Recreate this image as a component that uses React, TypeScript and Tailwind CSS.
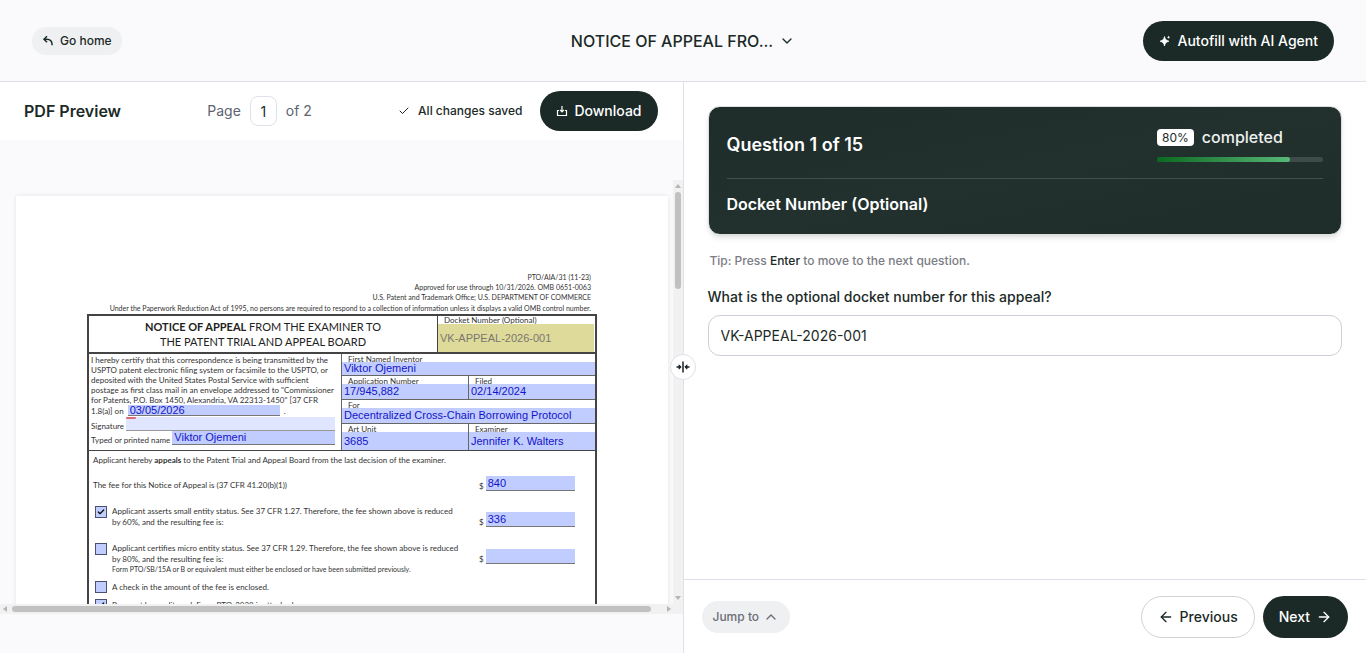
import React from "react";
import { ArrowLeft, ArrowRight, Check, ChevronDown, ChevronUp } from "lucide-react";

const fieldBase =
  "block min-h-0 min-w-0 rounded-none border-0 bg-[#c1cdff] px-0.5 py-0 font-['Liberation_Sans',Arial,sans-serif] text-[11px] text-[#1414c8] outline-none";

function GoBackIcon() {
  return (
    <svg viewBox="0 0 12 12" className="h-3 w-3" fill="none" stroke="currentColor" strokeWidth="1.5">
      <path d="M5 1.200 2 4.200l3 3" />
      <path d="M2.200 4.200h2.600c3.400 0 5.400 2.200 5.400 6" />
    </svg>
  );
}

function SparkIcon() {
  return (
    <svg viewBox="0 0 12 12" className="h-3 w-3" fill="currentColor">
      <path d="M5.500 1.600C6.100 4.400 7 5.400 9.900 6.200 7 7 6.100 8 5.500 10.900 4.900 8 4 7 1.100 6.200 4 5.400 4.900 4.400 5.500 1.600Z" stroke="currentColor" strokeWidth=".8" strokeLinejoin="round" />
      <path d="M9.600.5c.3 1.100.6 1.400 1.700 1.700-1.100.3-1.400.6-1.700 1.700-.3-1.100-.6-1.400-1.700-1.700C9 1.900 9.300 1.600 9.600.5Z" />
    </svg>
  );
}

function DownloadIcon() {
  return (
    <svg viewBox="0 0 12 12" className="h-3 w-3" fill="none" stroke="currentColor" strokeWidth="1.200">
      <path d="M6 1v5.500M4 4.800 6 6.800 8 4.800" />
      <path d="M3 5.500H1.500v5h9v-5H9" />
    </svg>
  );
}

function SplitIcon() {
  return (
    <svg viewBox="0 0 14 14" className="h-3.5 w-3.5" fill="none" stroke="currentColor" strokeWidth="1.500">
      <path d="M7 1.500v11M.5 7h4.300M13.500 7H9.200" />
      <path d="M3 4.800 5.200 7 3 9.200ZM11 4.800 8.800 7l2.200 2.200Z" fill="currentColor" strokeWidth=".8" />
    </svg>
  );
}

function Cell({ id, label, value, height }: { id: string; label: string; value: string; height: string }) {
  return (
    <div className={`flex min-w-0 flex-1 flex-col ${height}`}>
      <label htmlFor={id} className="h-2 shrink-0 pl-1.5 leading-[10px]">
        {label}
      </label>
      <input id={id} defaultValue={value} className={`${fieldBase} w-full flex-1`} />
    </div>
  );
}

function Fee({ id, value }: { id: string; value: string }) {
  return (
    <div className="flex w-24 items-end gap-0.5">
      <label htmlFor={id} className="leading-[9px]">$</label>
      <div className="flex-1 border-b border-[#777]">
        <input id={id} defaultValue={value} className={`${fieldBase} h-3.5 w-full`} />
      </div>
    </div>
  );
}

function Tick({ id, checked }: { id: string; checked?: boolean }) {
  return (
    <span className="relative block h-3 w-3 shrink-0">
      <input
        id={id}
        type="checkbox"
        defaultChecked={checked}
        className="peer block h-3 w-3 appearance-none border border-[#4a5070] bg-[#c1cdff]"
      />
      <Check className="pointer-events-none absolute top-0.5 left-0.5 hidden h-2 w-2 text-[#111] peer-checked:block" strokeWidth={4} />
    </span>
  );
}

function PdfPage() {
  return (
    <article className="w-[652px] shrink-0 bg-white px-[71px] pt-[76px] font-[Lato,sans-serif] text-[8px] whitespace-nowrap text-[#333] shadow-[0_0_4px_rgba(0,0,0,0.1)]">
      <div className="pr-1.5 pb-px text-right text-[7px] leading-[10px]">
        <p>PTO/AIA/31 (11-23)</p>
        <p>Approved for use through 10/31/2026. OMB 0651-0063</p>
        <p>U.S. Patent and Trademark Office; U.S. DEPARTMENT OF COMMERCE</p>
        <p className="pt-px">
          Under the Paperwork Reduction Act of 1995, no persons are required to respond to a collection of information unless it displays a valid OMB control number.
        </p>
      </div>

      <div className="border-x-2 border-t-2 border-[#444]">
        <div className="flex h-[38px] border-b-2 border-[#444]">
          <h2 className="flex-1 pt-[3px] text-center text-[11px] leading-[15px] text-[#222]">
            <b>NOTICE OF APPEAL</b> FROM THE EXAMINER TO
            <br />
            THE PATENT TRIAL AND APPEAL BOARD
          </h2>
          <div className="flex w-[158px] flex-col border-l border-[#444] pr-px">
            <label htmlFor="docket-pdf" className="h-2 pl-1.5 leading-[9px]">Docket Number (Optional)</label>
            <input
              id="docket-pdf"
              defaultValue="VK-APPEAL-2026-001"
              className="block min-h-0 w-full flex-1 border-0 bg-[#dedb9a] px-0.5 font-['Liberation_Sans',Arial,sans-serif] text-[11px] text-[#7b7670] outline-none"
            />
          </div>
        </div>

        <div className="flex border-b border-[#444]">
          <div className="w-[252px] pl-0.5">
            <p className="pt-px leading-[10px]">
              I hereby certify that this correspondence is being transmitted by the
              <br />
              USPTO patent electronic filing system or facsimile to the USPTO, or
              <br />
              deposited with the United States Postal Service with sufficient
              <br />
              postage as first class mail in an envelope addressed to "Commissioner
              <br />
              for Patents, P.O. Box 1450, Alexandria, VA 22313-1450" [37 CFR
            </p>
            <div className="flex h-[11px] items-end gap-1">
              <label htmlFor="cert-date" className="leading-[9px]">1.8(a)] on</label>
              <input id="cert-date" defaultValue="03/05/2026" className={`${fieldBase} h-[11px] w-[152px] border-b border-[#777]`} />
              <span className="leading-[9px]">.</span>
            </div>
            <div className="mt-px flex h-3.5 items-end gap-0.5 pr-1.5">
              <label htmlFor="signature" className="leading-[9px]">Signature</label>
              <span className="relative flex-1">
                <input id="signature" className="block h-3.5 w-full border-b border-[#999] bg-[#e0e6ff] outline-none" />
                <span className="absolute top-0 left-0 h-0.5 w-2.5 rounded-sm bg-[#e06a70]" />
              </span>
            </div>
            <div className="flex h-3.5 items-end gap-0.5 pr-1.5">
              <label htmlFor="printed-name" className="leading-[9px]">Typed or printed name</label>
              <input id="printed-name" defaultValue="Viktor Ojemeni" className={`${fieldBase} h-3.5 flex-1 border-b border-[#777]`} />
            </div>
          </div>
          <div className="flex-1 divide-y divide-[#666] border-l border-[#666]">
            <div className="flex">
              <Cell id="inventor" label="First Named Inventor" value="Viktor Ojemeni" height="h-[21px]" />
            </div>
            <div className="flex divide-x divide-[#666]">
              <Cell id="application" label="Application Number" value="17/945,882" height="h-[23px]" />
              <Cell id="filed" label="Filed" value="02/14/2024" height="h-[23px]" />
            </div>
            <div className="flex">
              <Cell id="title" label="For" value="Decentralized Cross-Chain Borrowing Protocol" height="h-[23px]" />
            </div>
            <div className="flex divide-x divide-[#666]">
              <Cell id="art-unit" label="Art Unit" value="3685" height="h-[26px]" />
              <Cell id="examiner" label="Examiner" value="Jennifer K. Walters" height="h-[26px]" />
            </div>
          </div>
        </div>

        <div className="h-[500px] pt-1 pr-5 pl-1">
          <p className="leading-[11px]">
            Applicant hereby <b>appeals</b> to the Patent Trial and Appeal Board from the last decision of the examiner.
          </p>
          <div className="mt-2.5 flex items-end justify-between">
            <span className="leading-[11px]">The fee for this Notice of Appeal is (37 CFR 41.20(b)(1))</span>
            <Fee id="fee-notice" value="840" />
          </div>
          <div className="mt-[15px] flex items-start justify-between pl-0.5">
            <div className="flex gap-[5px]">
              <Tick id="small-entity" checked />
              <label htmlFor="small-entity" className="leading-[11px]">
                Applicant asserts small entity status. See 37 CFR 1.27. Therefore, the fee shown above is reduced
                <br />
                by 60%, and the resulting fee is:
              </label>
            </div>
            <div className="pt-1.5"><Fee id="fee-small" value="336" /></div>
          </div>
          <div className="mt-[15px] flex items-start justify-between pl-0.5">
            <div className="flex gap-[5px]">
              <Tick id="micro-entity" />
              <label htmlFor="micro-entity" className="leading-[11px]">
                Applicant certifies micro entity status. See 37 CFR 1.29. Therefore, the fee shown above is reduced
                <br />
                by 80%, and the resulting fee is:
                <span className="block text-[7px] leading-[8px]">
                  Form PTO/SB/15A or B or equivalent must either be enclosed or have been submitted previously.
                </span>
              </label>
            </div>
            <div className="pt-1.5"><Fee id="fee-micro" value="" /></div>
          </div>
          <div className="mt-2 flex gap-[5px] pl-0.5">
            <Tick id="check-enclosed" />
            <label htmlFor="check-enclosed" className="leading-[12px]">A check in the amount of the fee is enclosed.</label>
          </div>
          <div className="mt-1.5 flex gap-[5px] pl-0.5">
            <Tick id="card" checked />
            <label htmlFor="card" className="leading-[12px]">Payment by credit card. Form PTO-2038 is attached.</label>
          </div>
        </div>
      </div>
    </article>
  );
}

export default function App() {
  return (
    <div className="flex h-screen flex-col overflow-hidden bg-[#fafafc] font-[Inter,sans-serif] text-[#1b2a27]">
      <header className="grid h-[82px] shrink-0 grid-cols-3 items-center border-b border-[#dfe1e8] px-8">
        <div>
          <button className="flex h-7 items-center gap-1.5 rounded-full bg-[#eff0f2] px-2.5 text-xs font-medium">
            <GoBackIcon />
            Go home
          </button>
        </div>
        <button className="flex items-center justify-center gap-1.5 text-base font-medium">
          NOTICE OF APPEAL FRO...
          <ChevronDown className="h-4 w-4" />
        </button>
        <div className="flex justify-end">
          <button className="flex h-10 items-center gap-1.5 rounded-full bg-[#1b2a27] px-4 text-sm font-medium text-white">
            <SparkIcon />
            Autofill with AI Agent
          </button>
        </div>
      </header>

      <main className="relative flex min-h-0 flex-1">
        <section className="flex min-w-0 flex-1 flex-col">
          <div className="flex h-[58px] shrink-0 items-center justify-between bg-white pr-[25px] pl-6">
            <h1 className="text-base font-semibold">PDF Preview</h1>
            <div className="flex items-center gap-[9px] text-sm text-[#5c6470]">
              <label htmlFor="page">Page</label>
              <input id="page" defaultValue="1" className="h-[30px] w-[27px] rounded-lg border border-[#dfe1e8] bg-white text-center text-sm text-[#1b2a27] outline-none" />
              <span>of 2</span>
            </div>
            <div className="flex items-center gap-[18px]">
              <span className="flex items-center gap-2 text-xs font-medium">
                <Check className="h-3 w-3" />
                All changes saved
              </span>
              <button className="flex h-10 items-center gap-1.5 rounded-full bg-[#1b2a27] px-4 text-sm font-medium text-white">
                <DownloadIcon />
                Download
              </button>
            </div>
          </div>

          <div className="flex min-h-0 flex-1 flex-col pt-10 pb-[39px]">
            <div className="flex min-h-0 flex-1">
              <div className="flex min-w-0 flex-1 items-start overflow-hidden pt-4 pl-4">
                <PdfPage />
              </div>
              <div className="flex w-2.5 shrink-0 flex-col items-center justify-between bg-[#f1f1f1] py-1">
                <span className="border-x-[3px] border-b-4 border-x-transparent border-b-[#b5b5b5]" />
                <span className="mt-1 h-[97px] w-1.5 rounded-full bg-[#c1c1c1]" />
                <span className="flex-1" />
                <span className="border-x-[3px] border-t-4 border-x-transparent border-t-[#b5b5b5]" />
              </div>
            </div>
            <div className="flex h-2.5 shrink-0 items-center bg-[#f1f1f1] pr-3 pl-[3px]">
              <span className="border-y-[3px] border-r-4 border-y-transparent border-r-[#b5b5b5]" />
              <span className="mr-4 ml-[5px] h-1.5 flex-1 rounded-full bg-[#c1c1c1]" />
              <span className="border-y-[3px] border-l-4 border-y-transparent border-l-[#b5b5b5]" />
            </div>
          </div>
        </section>

        <section className="flex min-w-0 flex-1 flex-col border-l border-[#dfe1e8] bg-white">
          <div className="flex-1 p-6">
            <div className="rounded-xl border border-[#dcdfde] bg-linear-to-br from-[#1e2d2a] via-[#22312e] to-[#1e2d2a] px-[18px] pt-5 pb-[19px] text-white shadow-md">
              <div className="flex items-center justify-between border-b border-[#42504d] pb-4">
                <h2 className="text-lg font-semibold">Question 1 of 15</h2>
                <div className="w-[166px]">
                  <div className="flex items-center gap-2">
                    <span className="rounded-sm bg-white px-[5px] text-xs leading-[17px] text-[#1b2a27]">80%</span>
                    <span className="text-base leading-5 font-medium text-[#eef1f0]">completed</span>
                  </div>
                  <div className="mt-[10px] h-[5px] rounded-full bg-[#3e4b48]">
                    <div className="h-full w-4/5 rounded-full bg-linear-to-r from-[#076a20] to-[#56b877]" />
                  </div>
                </div>
              </div>
              <h3 className="pt-3.5 text-base leading-[22px] font-semibold">Docket Number (Optional)</h3>
            </div>
            <p className="mt-4 pl-0.5 text-xs leading-5 font-medium text-[#7b7d85]">
              Tip: Press <span className="text-[#1b2a27]">Enter</span> to move to the next question.
            </p>
            <label htmlFor="docket" className="mt-4 block text-sm leading-5 font-medium">
              What is the optional docket number for this appeal?
            </label>
            <input
              id="docket"
              defaultValue="VK-APPEAL-2026-001"
              className="mt-2 h-[41px] w-full rounded-xl border border-[#cdd0d8] bg-white px-3 text-sm outline-none"
            />
          </div>
          <footer className="flex shrink-0 items-center justify-between border-t border-[#dfe1e8] px-[18px] pt-4 pb-[15px]">
            <button className="flex h-8 items-center gap-1 rounded-full bg-[#eff0f2] px-[11px] text-xs font-medium text-[#6b6e76]">
              Jump to
              <ChevronUp className="h-4 w-4" />
            </button>
            <div className="flex gap-2">
              <button className="flex h-[42px] items-center gap-1.5 rounded-full border border-[#cfd3d5] bg-white px-4 text-sm font-medium">
                <ArrowLeft className="h-4 w-4" />
                Previous
              </button>
              <button className="flex h-[42px] items-center gap-1.5 rounded-full bg-[#1b2a27] px-4 text-sm font-medium text-white">
                Next
                <ArrowRight className="h-4 w-4" />
              </button>
            </div>
          </footer>
        </section>

        <button
          aria-label="Resize panels"
          className="absolute top-[285px] left-1/2 flex h-[26px] w-[26px] -translate-x-1/2 -translate-y-1/2 items-center justify-center rounded-full border border-[#dfe1e8] bg-white text-[#1b1f24]"
        >
          <SplitIcon />
        </button>
      </main>
    </div>
  );
}
